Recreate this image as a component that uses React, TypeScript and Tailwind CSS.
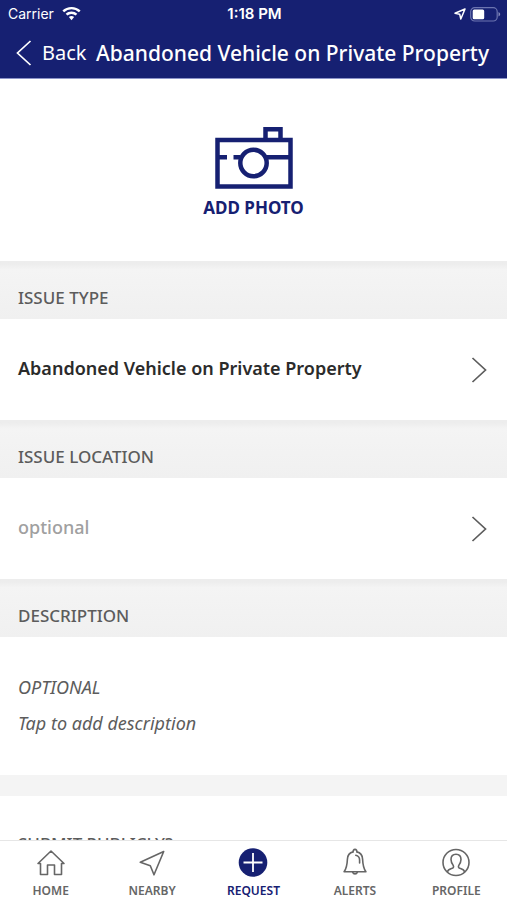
import React, { useState } from 'react';

interface IconProps {
  className?: string;
}

function WifiIcon() {
  return (
    <svg width="19" height="14" viewBox="0 0 19 14" fill="currentColor" aria-hidden="true">
      <path d="M9.500 0C6 0 2.800 1.300.4 3.500l1.700 1.800a10.700 10.700 0 0 1 14.800 0l1.700-1.800A13.400 13.400 0 0 0 9.500 0Z" />
      <path d="M9.500 4.600c-2.200 0-4.200.8-5.800 2.200l1.700 1.800a6 6 0 0 1 8.200 0l1.700-1.800a8.600 8.600 0 0 0-5.800-2.200Z" />
      <path d="M9.500 9c-1 0-1.900.4-2.600 1l2.600 3.300 2.600-3.300A3.900 3.900 0 0 0 9.500 9Z" />
    </svg>
  );
}

function LocationIcon() {
  return (
    <svg width="12" height="12" viewBox="0 0 12 12" fill="none" stroke="currentColor" strokeWidth="1.500" strokeLinejoin="round" aria-hidden="true">
      <path d="M11 1 1 5.200l4.700 1L6.800 11 11 1Z" />
    </svg>
  );
}

function BatteryIcon() {
  return (
    <svg width="31" height="15" viewBox="0 0 31 15" fill="none" aria-hidden="true">
      <rect x="0.700" y="0.700" width="26.500" height="13.300" rx="4" stroke="#6c74b0" strokeWidth="1.200" />
      <rect x="2.700" y="2.500" width="11.500" height="9.700" rx="1.500" fill="#fff" />
      <path d="M28.500 5v4.500c1-.4 1.700-1.200 1.700-2.200s-.7-1.900-1.700-2.300Z" fill="#8389bb" />
    </svg>
  );
}

function Chevron({ className }: IconProps) {
  return (
    <svg width="16" height="26" viewBox="0 0 16 26" fill="none" stroke="currentColor" strokeWidth="1.700" className={className} aria-hidden="true">
      <path d="M1.500 1 14.500 13l-13 12" />
    </svg>
  );
}

function CameraIcon() {
  return (
    <svg width="78" height="64" viewBox="0 0 78 64" fill="none" stroke="currentColor" strokeWidth="4.500" aria-hidden="true">
      <rect x="2.500" y="14" width="73" height="46.500" />
      <path d="M50.500 14V3.200h15V14M2 31.200h10M18.500 31.200h7M51 31.200h24" />
      <circle cx="38.500" cy="37" r="13.200" />
    </svg>
  );
}

function HomeIcon() {
  return (
    <svg width="30" height="30" viewBox="0 0 30 30" fill="none" stroke="currentColor" strokeWidth="1.600" strokeLinejoin="round" strokeLinecap="round" aria-hidden="true">
      <path d="M2 15.500 15 3l13 12.500h-2.500V26.500h-7V17h-7v9.500h-7V15.500H2Z" />
    </svg>
  );
}

function NearbyIcon() {
  return (
    <svg width="30" height="30" viewBox="0 0 30 30" fill="none" stroke="currentColor" strokeWidth="1.600" strokeLinejoin="round" aria-hidden="true">
      <path d="M26.700 3.500 3.300 14.300l10 3.500 3.700 9L26.700 3.500Z" />
    </svg>
  );
}

function RequestIcon() {
  return (
    <svg width="30" height="30" viewBox="0 0 30 30" fill="none" aria-hidden="true">
      <circle cx="15" cy="14.500" r="14.300" fill="currentColor" />
      <path d="M15 5v19M5.500 14.500h19" stroke="#fff" strokeWidth="1.800" />
    </svg>
  );
}

function BellIcon() {
  return (
    <svg width="30" height="30" viewBox="0 0 30 30" fill="none" stroke="currentColor" strokeWidth="1.600" strokeLinejoin="round" strokeLinecap="round" aria-hidden="true">
      <path d="M13.200 3.900a1.900 1.900 0 1 1 3.600 0c3.800.9 5.700 3.700 5.800 7.300.2 5.400.8 8.900 3.300 12.600H4.100c2.500-3.700 3.100-7.200 3.300-12.600.1-3.600 2-6.400 5.800-7.300Z" />
      <path d="M12.700 24.200a2.400 2.400 0 0 0 4.600 0M15.800 7.300c2.500.6 3.800 2.200 3.800 4.700v3" />
    </svg>
  );
}

function ProfileIcon() {
  return (
    <svg width="30" height="30" viewBox="0 0 30 30" fill="none" stroke="currentColor" strokeWidth="1.600" strokeLinejoin="round" aria-hidden="true">
      <circle cx="15" cy="14.500" r="13" />
      <path d="M6.300 24c.5-2 1.700-2.800 4.200-3.500 2-.6 2.500-1.600 1.700-3.100-1.400-1.900-2.200-3.500-2.200-5.800 0-3.300 1.900-5.400 5-5.400s5 2.100 5 5.400c0 2.300-.8 3.900-2.200 5.800-.8 1.500-.3 2.500 1.700 3.100 2.500.7 3.700 1.500 4.200 3.500" />
    </svg>
  );
}

const tabs = [
  { label: 'HOME', Icon: HomeIcon },
  { label: 'NEARBY', Icon: NearbyIcon },
  { label: 'REQUEST', Icon: RequestIcon },
  { label: 'ALERTS', Icon: BellIcon },
  { label: 'PROFILE', Icon: ProfileIcon },
];

interface SectionProps {
  title: string;
  value: string;
  muted?: boolean;
}

function SectionTitle({ title }: { title: string }) {
  return (
    <h2 className="h-[58px] px-[18px] pt-4 flex items-center text-[17px] leading-6 font-medium text-[#5c5c5c] bg-linear-to-b from-[#ededed] from-5% via-[#f4f4f4] via-15% to-[#f0f0f0]">
      {title}
    </h2>
  );
}

function LinkSection({ title, value, muted }: SectionProps) {
  return (
    <section>
      <SectionTitle title={title} />
      <button type="button" className="w-full h-[101px] pl-[18px] pr-5 flex items-center justify-between text-left text-lg font-semibold cursor-pointer">
        <span className={muted ? 'pb-1 font-medium text-[#a0a0a0]' : 'pb-1 text-[#2b2b2b]'}>{value}</span>
        <Chevron className="text-[#5c5c5c]" />
      </button>
    </section>
  );
}

export default function App() {
  const [active, setActive] = useState('REQUEST');
  const [description, setDescription] = useState('');

  return (
    <div className="h-screen flex flex-col bg-white font-['Noto_Sans',sans-serif]">
      <header className="bg-[#162072] text-white border-b border-[#8b93c9]">
        <div className="h-7 pl-2 pr-1.5 grid grid-cols-3 items-center text-sm leading-5 font-['Inter',sans-serif]">
          <div className="flex items-center gap-2">
            <span>Carrier</span>
            <WifiIcon />
          </div>
          <span className="text-center text-[15px] font-semibold">1:18 PM</span>
          <div className="flex items-center justify-end gap-1">
            <LocationIcon />
            <BatteryIcon />
          </div>
        </div>
        <div className="h-[50px] pl-4 pr-[18px] flex items-center justify-between whitespace-nowrap">
          <button type="button" className="flex items-center gap-2.5 text-xl cursor-pointer">
            <Chevron className="rotate-180" />
            <span>Back</span>
          </button>
          <h1 className="text-[21px] leading-7 font-medium">Abandoned Vehicle on Private Property</h1>
        </div>
      </header>

      <main className="flex-1 min-h-0 overflow-y-auto [scrollbar-width:none]">
        <button type="button" className="w-full h-[182px] pt-1.5 flex flex-col items-center justify-center gap-1.5 text-[#162072] cursor-pointer">
          <CameraIcon />
          <span className="text-[17px] leading-6 font-bold">ADD PHOTO</span>
        </button>

        <LinkSection title="ISSUE TYPE" value="Abandoned Vehicle on Private Property" />
        <LinkSection title="ISSUE LOCATION" value="optional" muted />

        <section>
          <SectionTitle title="DESCRIPTION" />
          <div className="h-[138px] px-[18px] pt-9 text-lg italic text-[#5c5c5c]">
            <label htmlFor="description" className="block">OPTIONAL</label>
            <textarea
              id="description"
              rows={1}
              placeholder="Tap to add description"
              className="block w-full mt-2 resize-none placeholder:text-[#5c5c5c] focus:outline-none"
              value={description}
              onChange={(e) => setDescription(e.target.value)}
            />
          </div>
        </section>

        <section className="border-t-[21px] border-[#f4f4f4] px-[18px] py-9">
          <h2 className="text-[17px] leading-6 font-medium text-[#5c5c5c]">SUBMIT PUBLICLY?</h2>
        </section>
      </main>

      <nav className="h-[60px] grid grid-cols-5 border-t border-[#e6e6e6] bg-white">
        {tabs.map(({ label, Icon }) => (
          <button
            key={label}
            type="button"
            onClick={() => setActive(label)}
            className={`flex flex-col items-center pt-[7px] gap-[5px] text-xs font-semibold cursor-pointer ${
              active === label ? 'text-[#162072]' : 'text-[#666]'
            }`}
          >
            <Icon />
            <span>{label}</span>
          </button>
        ))}
      </nav>
    </div>
  );
}
